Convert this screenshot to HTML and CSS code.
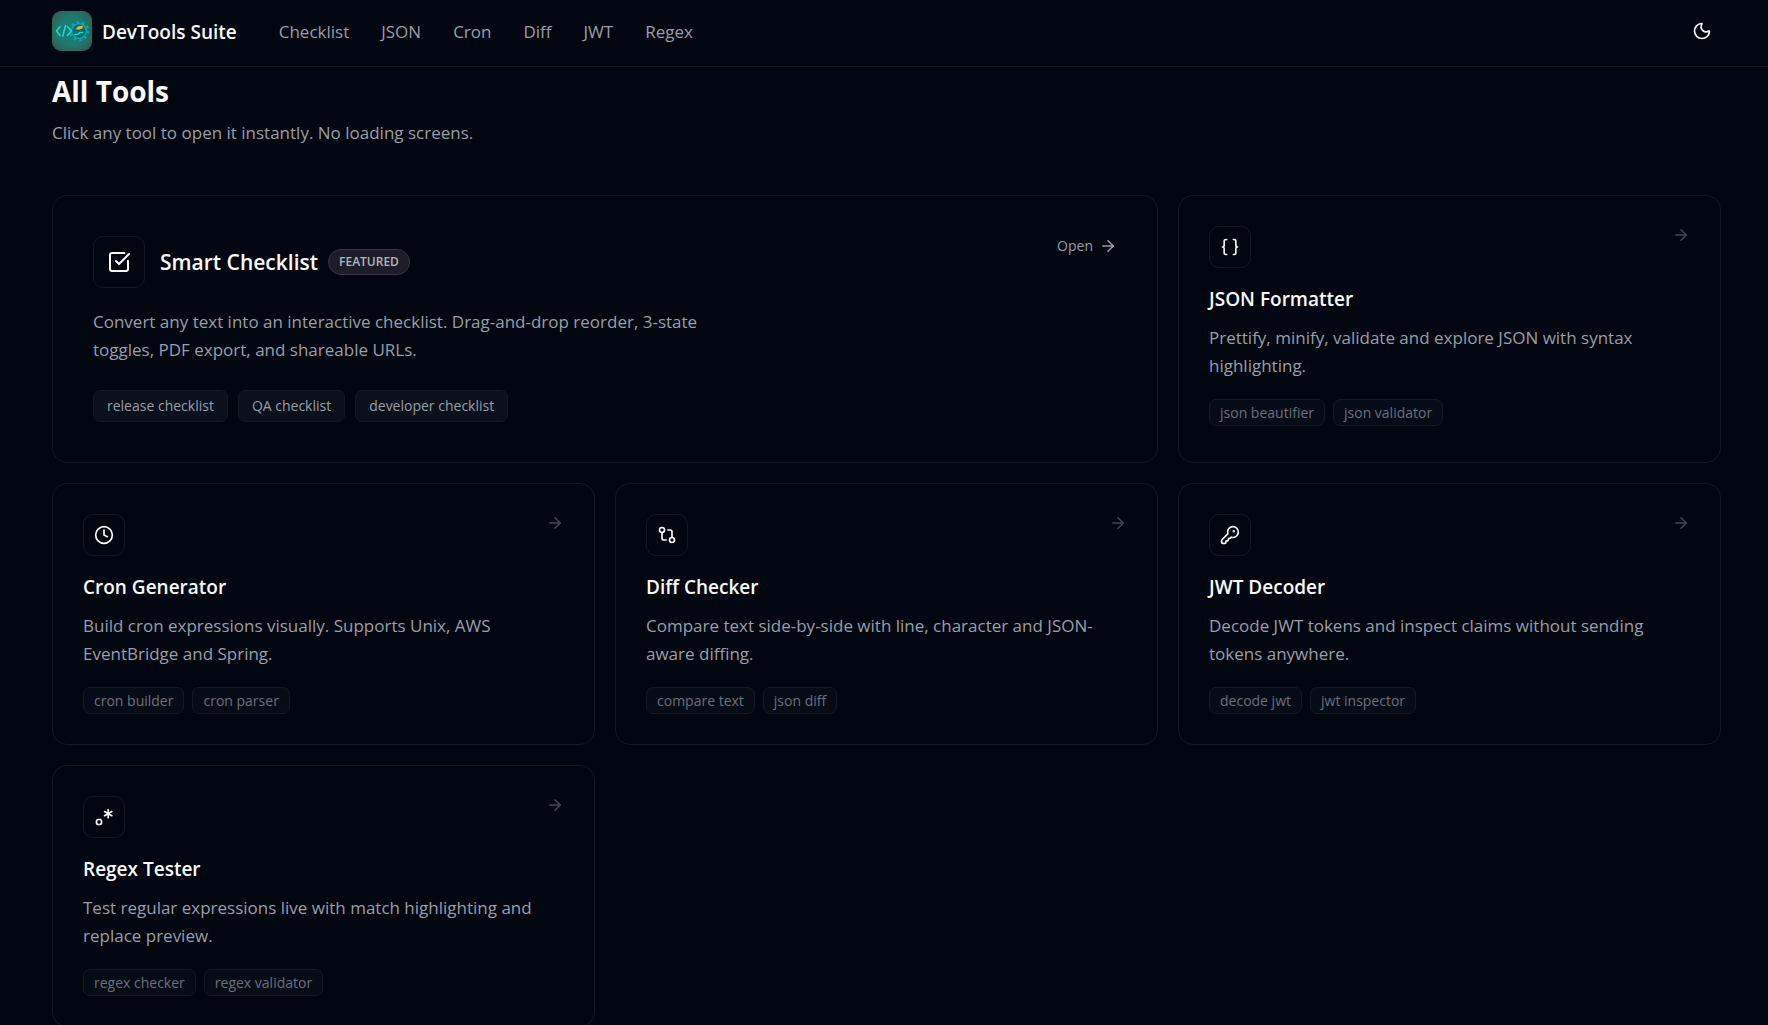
FILE: index.html
```html
<!DOCTYPE html>
<html lang="en">
<head>
  <meta charset="utf-8">
  <meta name="viewport" content="width=device-width, initial-scale=1">
  <title>DevTools Suite</title>
  <link rel="stylesheet" href="styles.css">
</head>
<body>
  <header class="header">
    <a class="brand" href="#">
      <svg class="brand-logo" viewBox="0 0 40 40" aria-hidden="true">
        <defs>
          <radialGradient id="logo-bg" cx="50%" cy="50%" r="70%">
            <stop offset="0" stop-color="#0b827e"/>
            <stop offset="0.5" stop-color="#1f7a6e"/>
            <stop offset="0.8" stop-color="#2c6358"/>
            <stop offset="1" stop-color="#1d4a43"/>
          </radialGradient>
        </defs>
        <rect width="40" height="40" rx="9" fill="url(#logo-bg)"/>
        <circle cx="27" cy="20" r="8" fill="#0a6a70"/>
        <circle cx="27" cy="20" r="9" fill="none" stroke="#0ba3b0" stroke-width="2.2" stroke-dasharray="2.6 3.05"/>
        <circle cx="27" cy="20" r="7.4" fill="none" stroke="#0fb0b6" stroke-width="1.2"/>
        <path d="M22.5 23.5h3l2.5-2h3.5" fill="none" stroke="#1fe0c8" stroke-width="1.4"/>
        <path d="M23.5 18l2.5-2.5 5-1-.5 3-4 1.2z" fill="#e5b523"/>
        <path d="M8 15.5L4.500 20l3.500 4.500M13.500 14.500l-2.700 10.500M15.500 15.500l4 4.500-4 4.500" fill="none" stroke="#22dccb" stroke-width="1.500" stroke-linecap="round" stroke-linejoin="round"/>
      </svg>
      <span class="brand-name">DevTools Suite</span>
    </a>
    <nav class="nav" aria-label="Tools">
      <a href="#checklist">Checklist</a>
      <a href="#json">JSON</a>
      <a href="#cron">Cron</a>
      <a href="#diff">Diff</a>
      <a href="#jwt">JWT</a>
      <a href="#regex">Regex</a>
    </nav>
    <button class="theme-toggle" type="button" aria-label="Toggle theme">
      <svg class="icon" viewBox="0 0 24 24"><path d="M20.985 12.486a9 9 0 1 1-9.473-9.472c.405-.022.617.46.402.803a6 6 0 0 0 8.268 8.268c.344-.215.825-.004.803.401"/></svg>
    </button>
  </header>

  <main class="tools">
    <h1 class="title">All Tools</h1>
    <p class="subtitle">Click any tool to open it instantly. No loading screens.</p>

    <div class="grid">
      <a class="card card-featured" id="checklist" href="#checklist">
        <div class="card-head">
          <div class="lead">
            <span class="icon-box"><svg class="icon" viewBox="0 0 24 24"><path d="M21 10.656V19a2 2 0 0 1-2 2H5a2 2 0 0 1-2-2V5a2 2 0 0 1 2-2h12.344"/><path d="m9 11 3 3L22 4"/></svg></span>
            <h2 class="card-title">Smart Checklist</h2>
            <span class="badge">FEATURED</span>
          </div>
          <span class="open">Open <svg class="icon arrow" viewBox="0 0 24 24"><path d="M5 12h14"/><path d="m12 5 7 7-7 7"/></svg></span>
        </div>
        <p class="desc">Convert any text into an interactive checklist. Drag-and-drop reorder, 3-state toggles, PDF export, and shareable URLs.</p>
        <div class="tags"><span class="tag">release checklist</span><span class="tag">QA checklist</span><span class="tag">developer checklist</span></div>
      </a>

      <a class="card" id="json" href="#json">
        <div class="card-head">
          <span class="icon-box"><svg class="icon" viewBox="0 0 24 24"><path d="M8 3H7a2 2 0 0 0-2 2v5a2 2 0 0 1-2 2 2 2 0 0 1 2 2v5c0 1.1.9 2 2 2h1"/><path d="M16 21h1a2 2 0 0 0 2-2v-5c0-1.1.9-2 2-2a2 2 0 0 1-2-2V5a2 2 0 0 0-2-2h-1"/></svg></span>
          <svg class="icon arrow" viewBox="0 0 24 24"><path d="M5 12h14"/><path d="m12 5 7 7-7 7"/></svg>
        </div>
        <h2 class="card-title">JSON Formatter</h2>
        <p class="desc">Prettify, minify, validate and explore JSON with syntax highlighting.</p>
        <div class="tags"><span class="tag">json beautifier</span><span class="tag">json validator</span></div>
      </a>

      <a class="card" id="cron" href="#cron">
        <div class="card-head">
          <span class="icon-box"><svg class="icon" viewBox="0 0 24 24"><circle cx="12" cy="12" r="10"/><path d="M12 6v6l4 2"/></svg></span>
          <svg class="icon arrow" viewBox="0 0 24 24"><path d="M5 12h14"/><path d="m12 5 7 7-7 7"/></svg>
        </div>
        <h2 class="card-title">Cron Generator</h2>
        <p class="desc">Build cron expressions visually. Supports Unix, AWS EventBridge and Spring.</p>
        <div class="tags"><span class="tag">cron builder</span><span class="tag">cron parser</span></div>
      </a>

      <a class="card" id="diff" href="#diff">
        <div class="card-head">
          <span class="icon-box"><svg class="icon" viewBox="0 0 24 24"><circle cx="18" cy="18" r="3"/><circle cx="6" cy="6" r="3"/><path d="M13 6h3a2 2 0 0 1 2 2v7"/><path d="M11 18H8a2 2 0 0 1-2-2V9"/></svg></span>
          <svg class="icon arrow" viewBox="0 0 24 24"><path d="M5 12h14"/><path d="m12 5 7 7-7 7"/></svg>
        </div>
        <h2 class="card-title">Diff Checker</h2>
        <p class="desc">Compare text side-by-side with line, character and JSON-aware diffing.</p>
        <div class="tags"><span class="tag">compare text</span><span class="tag">json diff</span></div>
      </a>

      <a class="card" id="jwt" href="#jwt">
        <div class="card-head">
          <span class="icon-box"><svg class="icon" viewBox="0 0 24 24"><path d="M2.586 17.414A2 2 0 0 0 2 18.828V21a1 1 0 0 0 1 1h3a1 1 0 0 0 1-1v-1a1 1 0 0 1 1-1h1a1 1 0 0 0 1-1v-1a1 1 0 0 1 1-1h.172a2 2 0 0 0 1.414-.586l.814-.814a6.5 6.5 0 1 0-4-4z"/><circle cx="16.5" cy="7.5" r=".5" fill="currentColor"/></svg></span>
          <svg class="icon arrow" viewBox="0 0 24 24"><path d="M5 12h14"/><path d="m12 5 7 7-7 7"/></svg>
        </div>
        <h2 class="card-title">JWT Decoder</h2>
        <p class="desc">Decode JWT tokens and inspect claims without sending tokens anywhere.</p>
        <div class="tags"><span class="tag">decode jwt</span><span class="tag">jwt inspector</span></div>
      </a>

      <a class="card" id="regex" href="#regex">
        <div class="card-head">
          <span class="icon-box"><svg class="icon" viewBox="0 0 24 24"><path d="M17 3v10"/><path d="m12.67 5.5 8.66 5"/><path d="m12.67 10.5 8.66-5"/><path d="M9 17a2 2 0 0 0-2-2H5a2 2 0 0 0-2 2v2a2 2 0 0 0 2 2h2a2 2 0 0 0 2-2z"/></svg></span>
          <svg class="icon arrow" viewBox="0 0 24 24"><path d="M5 12h14"/><path d="m12 5 7 7-7 7"/></svg>
        </div>
        <h2 class="card-title">Regex Tester</h2>
        <p class="desc">Test regular expressions live with match highlighting and replace preview.</p>
        <div class="tags"><span class="tag">regex checker</span><span class="tag">regex validator</span></div>
      </a>
    </div>
  </main>
</body>
</html>
```
FILE: styles.css
```css
:root {
  --bg: #020611;
  --line: #141923;
  --text: #fafafa;
  --muted: #999ea8;
}

* { box-sizing: border-box; }

body {
  margin: 0;
  background: var(--bg);
  color: var(--text);
  font-family: "Segoe UI", "Open Sans", "Noto Sans", sans-serif;
  font-size: 17px;
  line-height: 28px;
}

h1, h2, p { margin: 0; }

a { color: inherit; text-decoration: none; }

.icon {
  display: block;
  flex: none;
  width: 20px;
  height: 20px;
  fill: none;
  stroke: currentColor;
  stroke-width: 2;
  stroke-linecap: round;
  stroke-linejoin: round;
}

/* Header */
.header {
  position: sticky;
  top: 0;
  z-index: 1;
  display: flex;
  align-items: center;
  padding: 11px 46px 15px 52px;
  border-bottom: 1px solid var(--line);
  background: var(--bg);
}

.brand { display: flex; align-items: center; gap: 10px; }
.brand-logo { display: block; width: 40px; height: 40px; }
.brand-name { padding-top: 2px; font-size: 19px; font-weight: 600; }

.nav { display: flex; gap: 32px; margin-left: 42px; padding-top: 2px; color: var(--muted); }

.theme-toggle {
  display: grid;
  place-items: center;
  width: 40px;
  height: 40px;
  margin-left: auto;
  padding: 0;
  border: 0;
  border-radius: 8px;
  background: none;
  color: var(--text);
}

/* Page heading */
.tools { padding: 7px 47px 0 52px; }
.title { font-size: 28px; font-weight: 700; line-height: 34px; }
.subtitle { margin-top: 11px; color: var(--muted); }

/* Cards */
.grid {
  display: grid;
  grid-template-columns: repeat(3, 1fr);
  gap: 20px;
  margin-top: 48px;
}

.card {
  display: flex;
  flex-direction: column;
  padding: 30px;
  border: 1px solid var(--line);
  border-radius: 15px;
}

.card-head { display: flex; align-items: flex-start; justify-content: space-between; }

.icon-box {
  display: grid;
  place-items: center;
  width: 42px;
  height: 42px;
  border: 1px solid var(--line);
  border-radius: 10px;
}

.arrow { width: 18px; height: 18px; }
.card-head > .arrow { color: #43474f; }

.card-title { margin-top: 18px; font-size: 19px; font-weight: 600; line-height: 26px; }
.desc { margin-top: 12px; color: var(--muted); }

.tags { display: flex; flex-wrap: wrap; gap: 8px; margin-top: 19px; }
.tag {
  padding: 3px 10px 2px;
  border: 1px solid var(--line);
  border-radius: 7px;
  background: #060c17;
  color: #6a6f7a;
  font-size: 14px;
  line-height: 20px;
}

/* Featured card */
.card-featured { grid-column: span 2; padding: 40px; }
.lead { display: flex; align-items: center; }
.card-featured .icon-box { width: 52px; height: 52px; }
.card-featured .icon-box .icon { width: 24px; height: 24px; }
.card-featured .card-title { margin: 0 10px 0 15px; font-size: 21px; }

.badge {
  padding: 2px 10px;
  border: 1px solid #363842;
  border-radius: 13px;
  background: #1c1d27;
  color: #b4b5bb;
  font-size: 12px;
  font-weight: 600;
  line-height: 20px;
}

.open {
  display: flex;
  align-items: center;
  gap: 6px;
  color: var(--muted);
  font-size: 14px;
  line-height: 20px;
}

.card-featured .desc { max-width: 640px; margin-top: 20px; }
.card-featured .tags { gap: 10px; margin-top: 26px; }
.card-featured .tag {
  padding: 5px 13px;
  background: #0a101c;
  color: var(--muted);
}
```
